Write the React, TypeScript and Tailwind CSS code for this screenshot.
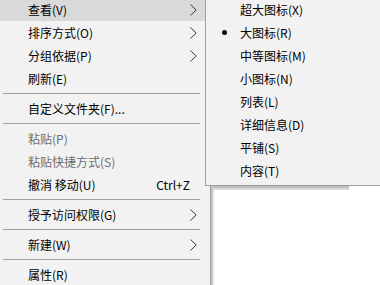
import React from 'react';

type Item =
  | { kind: 'item'; label: string; sub?: boolean; disabled?: boolean; hot?: boolean; shortcut?: string }
  | { kind: 'sep' };

const mainItems: Item[] = [
  { kind: 'item', label: '查看(V)', sub: true, hot: true },
  { kind: 'item', label: '排序方式(O)', sub: true },
  { kind: 'item', label: '分组依据(P)', sub: true },
  { kind: 'item', label: '刷新(E)' },
  { kind: 'sep' },
  { kind: 'item', label: '自定义文件夹(F)...' },
  { kind: 'sep' },
  { kind: 'item', label: '粘贴(P)', disabled: true },
  { kind: 'item', label: '粘贴快捷方式(S)', disabled: true },
  { kind: 'item', label: '撤消 移动(U)', shortcut: 'Ctrl+Z' },
  { kind: 'sep' },
  { kind: 'item', label: '授予访问权限(G)', sub: true },
  { kind: 'sep' },
  { kind: 'item', label: '新建(W)', sub: true },
  { kind: 'sep' },
  { kind: 'item', label: '属性(R)' },
];

const viewItems = [
  { label: '超大图标(X)' },
  { label: '大图标(R)', checked: true },
  { label: '中等图标(M)' },
  { label: '小图标(N)' },
  { label: '列表(L)' },
  { label: '详细信息(D)' },
  { label: '平铺(S)' },
  { label: '内容(T)' },
];

const Chevron = () => (
  <svg width="7" height="12" viewBox="0 0 7 12" className="shrink-0">
    <polyline points="0.5,0.5 6.2,6 0.5,11.5" fill="none" stroke="#3a3a3a" strokeWidth="1" />
  </svg>
);

export default function App() {
  return (
    <div className="relative w-[380px] h-[285px] overflow-hidden bg-white font-['Noto_Sans_CJK_SC',sans-serif] text-[12px] text-black">
      {/* Main context menu */}
      <div className="w-[211px] -mt-[2px] bg-[#f2f2f2] border-r border-[#a0a0a0] shadow-[2px_0_2px_rgba(0,0,0,0.28)] pb-[20px]">
        {mainItems.map((it, i) =>
          it.kind === 'sep' ? (
            <div key={i} className="h-[7px] flex items-center pl-[3px] pr-[10px]">
              <div className="h-px w-full bg-[#a0a0a0]" />
            </div>
          ) : (
            <div
              key={i}
              className={`h-[23px] flex items-center justify-between pl-[28px] pr-[11px] mr-[2px] ${
                it.hot ? 'bg-[#d9d9d9]' : ''
              } ${it.disabled ? 'text-[#6d6d6d]' : ''}`}
            >
              <span className="leading-[23px] whitespace-pre">{it.label}</span>
              {it.sub && <Chevron />}
              {it.shortcut && <span className="leading-[23px] mr-[7px]">{it.shortcut}</span>}
            </div>
          )
        )}
      </div>

      {/* View submenu */}
      <div className="absolute left-[205px] -top-[2px] w-[190px]">
        <div className="bg-[#f2f2f2] border-l border-b border-[#a0a0a0] pb-[3px]">
          {viewItems.map((v) => (
            <div key={v.label} className="relative h-[23px] flex items-center pl-[34px]">
              {v.checked && (
                <span className="absolute left-[16px] top-[9px] w-[5px] h-[5px] rounded-full bg-[#0a0a14]" />
              )}
              <span className="leading-[23px]">{v.label}</span>
            </div>
          ))}
        </div>
        <div className="ml-[8px] w-[136px] h-[4px] bg-gradient-to-b from-[#b4b4b4] to-[#e8e8e8]" />
      </div>
    </div>
  );
}
